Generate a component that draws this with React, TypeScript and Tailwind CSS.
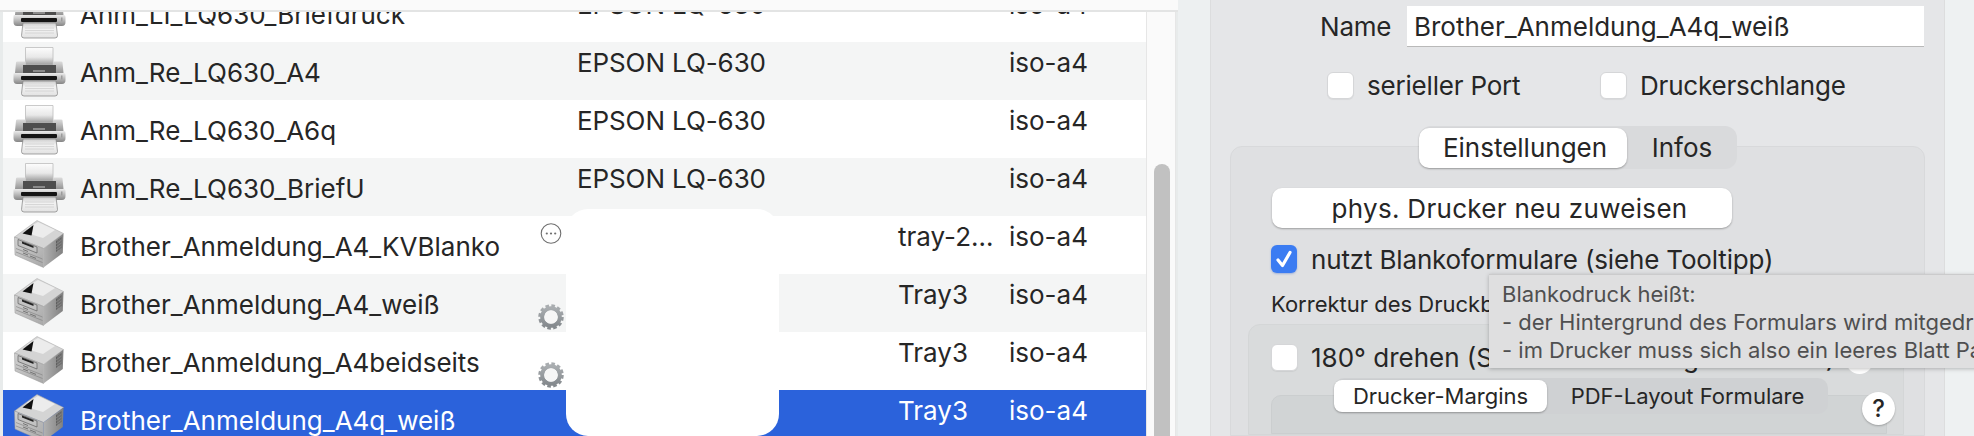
const font = "font-['Inter','Liberation_Sans',sans-serif]"

interface Row {
  name: string
  model: string
  tray: string
  kind: "dot" | "laser"
  badge?: "more" | "gear"
  selected?: boolean
}

const rows: Row[] = [
  { name: "Anm_LI_LQ630_Briefdruck", model: "EPSON LQ-630", tray: "", kind: "dot" },
  { name: "Anm_Re_LQ630_A4", model: "EPSON LQ-630", tray: "", kind: "dot" },
  { name: "Anm_Re_LQ630_A6q", model: "EPSON LQ-630", tray: "", kind: "dot" },
  { name: "Anm_Re_LQ630_BriefU", model: "EPSON LQ-630", tray: "", kind: "dot" },
  { name: "Brother_Anmeldung_A4_KVBlanko", model: "", tray: "tray-2…", kind: "laser", badge: "more" },
  { name: "Brother_Anmeldung_A4_weiß", model: "", tray: "Tray3", kind: "laser", badge: "gear" },
  { name: "Brother_Anmeldung_A4beidseits", model: "", tray: "Tray3", kind: "laser", badge: "gear" },
  { name: "Brother_Anmeldung_A4q_weiß", model: "", tray: "Tray3", kind: "laser", selected: true },
]

function DotPrinter() {
  return (
    <svg width="53" height="50" viewBox="0 0 53 50" className="mt-[5px] shrink-0">
      <defs>
        <linearGradient id="dp-paper" x1="0" y1="0" x2="0" y2="1">
          <stop offset="0" stopColor="#fdfdfd" />
          <stop offset="0.55" stopColor="#e8e8e8" />
          <stop offset="1" stopColor="#9c9c9c" />
        </linearGradient>
        <linearGradient id="dp-body" x1="0" y1="0" x2="0" y2="1">
          <stop offset="0" stopColor="#dcdcdc" />
          <stop offset="1" stopColor="#959595" />
        </linearGradient>
        <linearGradient id="dp-front" x1="0" y1="0" x2="0" y2="1">
          <stop offset="0" stopColor="#ececec" />
          <stop offset="1" stopColor="#858585" />
        </linearGradient>
        <linearGradient id="dp-out" x1="0" y1="0" x2="0" y2="1">
          <stop offset="0" stopColor="#cfcfcf" />
          <stop offset="0.4" stopColor="#f2f2f2" />
          <stop offset="1" stopColor="#e2e2e2" />
        </linearGradient>
      </defs>
      <path d="M12.5 0.5 H40 V18 H12.5 Z" fill="url(#dp-paper)" stroke="#bdbdbd" strokeWidth="0.8" />
      <path d="M3 15.5 Q3 14.5 4.5 14.5 H12.5 V18 H40 V14.5 H48 Q49.5 14.5 49.5 15.5 L50.5 26 H2 Z" fill="url(#dp-body)" />
      <rect x="10" y="18" width="33" height="8" fill="#4e4e4e" />
      <rect x="20" y="23" width="12" height="2" fill="#8b8b8b" />
      <path d="M1 26 H51 Q52.5 26 52.5 28 V33 Q52.5 37 49 37 H4 Q0.5 37 0.5 33 V28 Q0.5 26 1 26 Z" fill="url(#dp-front)" />
      <rect x="8" y="29" width="36" height="4" rx="1" fill="#141414" />
      <rect x="48" y="28.5" width="1.5" height="4" fill="#9b9b9b" />
      <path d="M10 34 H43 L44.5 46.5 Q44.5 49 42 49 H11 Q8.5 49 8.5 46.5 Z" fill="url(#dp-out)" stroke="#808080" strokeWidth="0.7" />
      <path d="M12 39 H41 M12 41.5 H41 M12 44 H41" stroke="#d0d0d0" strokeWidth="0.8" />
    </svg>
  )
}

function LaserPrinter() {
  return (
    <svg width="50" height="48" viewBox="0 0 50 48" className="mt-[4px] ml-[1px] shrink-0">
      <defs>
        <linearGradient id="lp-left" x1="0" y1="0" x2="1" y2="1">
          <stop offset="0" stopColor="#d2d2d2" />
          <stop offset="1" stopColor="#a8a8a8" />
        </linearGradient>
        <linearGradient id="lp-right" x1="0" y1="0" x2="1" y2="0">
          <stop offset="0" stopColor="#b2b2b2" />
          <stop offset="1" stopColor="#7f7f7f" />
        </linearGradient>
      </defs>
      <path d="M0.5 17 L23 0.5 L49.5 13.5 L29.5 28.5 Z" fill="#d4d4d4" stroke="#a6a6a6" strokeWidth="0.5" />
      <path d="M0.5 17 L29.5 28.5 V47.5 L1 35 Z" fill="url(#lp-left)" stroke="#969696" strokeWidth="0.5" />
      <path d="M29.5 28.5 L49.5 13.5 L48.8 33 L29.5 47.5 Z" fill="url(#lp-right)" />
      <path d="M13 8.5 L24 2 L41 10 L29 18 L19 15 Z" fill="#ececec" />
      <path d="M8.5 13.5 L19.5 5 L17.5 15.5 Z" fill="#111" />
      <path d="M4 19.5 L23 27 V33 L4 25.5 Z" fill="#c2c2c2" stroke="#5f5f5f" strokeWidth="0.7" />
      <path d="M8 21.5 L19.5 26 V28 L8 23.5 Z" fill="#222" />
      <path d="M2 28.5 L28.5 39 M2 32 L28.5 42.5" stroke="#7d7d7d" strokeWidth="0.6" />
      <path d="M9 29.5 L14 31.5 M16 36 L22 38.4 M9 33 L14 35" stroke="#5f5f5f" strokeWidth="0.8" />
      <path d="M42 21 L47.5 17 V28 L42 32 Z" fill="#5f5f5f" />
      <path d="M42 24 L47.5 20 M42 27 L47.5 23 M42 30 L47.5 26 M44 20 V31 M46 18.5 V29.5" stroke="#9c9c9c" strokeWidth="0.5" />
    </svg>
  )
}

function Gear() {
  return (
    <svg width="26" height="26" viewBox="0 0 26 26">
      <defs>
        <linearGradient id="gear-g" x1="0" y1="0" x2="0" y2="1">
          <stop offset="0" stopColor="#a9adb0" />
          <stop offset="1" stopColor="#858a8e" />
        </linearGradient>
      </defs>
      <circle cx="13" cy="13" r="10.5" fill="none" stroke="url(#gear-g)" strokeWidth="4.5" strokeDasharray="3.3 2.2" />
      <circle cx="13" cy="13" r="8.8" fill="none" stroke="url(#gear-g)" strokeWidth="4" />
      <circle cx="13" cy="13" r="6.6" fill="#f6f6f6" />
    </svg>
  )
}

function MoreIcon() {
  return (
    <svg width="22" height="21" viewBox="0 0 22 21">
      <circle cx="11" cy="10.5" r="9.8" fill="#fff" stroke="#6f6f6f" strokeWidth="1.1" />
      <circle cx="6.8" cy="10.5" r="1.1" fill="#6f6f6f" />
      <circle cx="11" cy="10.5" r="1.1" fill="#6f6f6f" />
      <circle cx="15.2" cy="10.5" r="1.1" fill="#6f6f6f" />
    </svg>
  )
}

function PrinterRow({ row, index }: { row: Row; index: number }) {
  const bg = row.selected ? "bg-[#2b62db] text-white" : index % 2 === 0 ? "bg-white" : "bg-[#f4f5f5]"
  return (
    <div className={`relative grid h-[58px] shrink-0 grid-cols-[574px_321px_111px_137px] text-[26px] leading-[30px] ${bg}`}>
      <div className="flex items-start pl-[10px]">
        <div className="w-[67px]">{row.kind === "dot" ? <DotPrinter /> : <LaserPrinter />}</div>
        <span className="pt-[16px] whitespace-nowrap">{row.name}</span>
      </div>
      <span className="pt-[6px] tracking-[-0.1px] whitespace-nowrap">{row.model}</span>
      <span className="pt-[6px] whitespace-nowrap">{row.tray}</span>
      <span className="pt-[6px] whitespace-nowrap">iso-a4</span>
      {row.badge === "more" && (
        <div className="absolute left-[537px] top-[7px]">
          <MoreIcon />
        </div>
      )}
      {row.badge === "gear" && (
        <div className="absolute left-[535px] top-[30px]">
          <Gear />
        </div>
      )}
    </div>
  )
}

function CheckBox({ checked }: { checked?: boolean }) {
  if (checked) {
    return (
      <span className="flex h-[28px] w-[26px] shrink-0 items-center justify-center rounded-[6px] bg-[#3b7cf2] shadow-[0_1px_2px_rgba(40,90,200,0.35)]">
        <svg width="18" height="20" viewBox="0 0 18 20">
          <path d="M3 11 L7.5 16.5 L15 3.5" fill="none" stroke="#fff" strokeWidth="3.2" strokeLinecap="round" strokeLinejoin="round" />
        </svg>
      </span>
    )
  }
  return <span className="block h-[27px] w-[27px] shrink-0 rounded-[6px] border border-[#d5d6d8] bg-white shadow-[0_1px_1px_rgba(0,0,0,0.06)]" />
}

function Tooltip() {
  return (
    <div className="absolute left-[1489px] top-[274px] h-[94px] w-[520px] border-t border-[#cbcbcc] bg-[#dfdfe0] pl-[13px] pt-[5px] text-[22px] leading-[28px] text-[#4f4f50] shadow-[0_1px_4px_rgba(0,0,0,0.25)] whitespace-nowrap">
      <div>Blankodruck heißt:</div>
      <div>- der Hintergrund des Formulars wird mitgedruckt</div>
      <div>- im Drucker muss sich also ein leeres Blatt Papier befinden</div>
    </div>
  )
}

export default function App() {
  return (
    <div className={`relative flex h-[436px] w-[1974px] overflow-hidden bg-[#eef1f2] text-[#262626] ${font}`}>
      {/* printer list */}
      <div className="flex h-full w-[1178px] shrink-0 flex-col">
        <div className="h-[12px] shrink-0 border-b-2 border-[#e3e4e4] bg-[#fafafa]" />
        <div className="flex min-h-0 flex-1 pl-[3px] bg-[#e8ebeb]">
          <div className="flex h-full w-[1143px] shrink-0 flex-col overflow-hidden">
            <div className="-mt-[28px] flex flex-col">
              {rows.map((row, i) => (
                <PrinterRow key={row.name} row={row} index={i} />
              ))}
            </div>
          </div>
          {/* scrollbar */}
          <div className="h-full w-[30px] shrink-0 border-x border-[#e6e6e6] bg-[#fafafa] pl-[7px] pt-[152px]">
            <div className="h-[400px] w-[16px] rounded-full bg-[#c1c1c1]" />
          </div>
        </div>
      </div>

      <div className="w-[32px] shrink-0 bg-[#edf0f1]" />

      {/* detail panel */}
      <div className="flex h-full w-[735px] shrink-0 flex-col border-x border-[#dcddde] bg-[#e5e6e8]">
        <div className="mt-[6px] flex h-[41px] items-center pl-[109px]">
          <span className="w-[87px] text-[26px] tracking-[-0.2px]">Name</span>
          <div className="flex h-[41px] w-[517px] items-center border-b border-[#b9b9b9] bg-white pl-[7px] text-[26px]">
            Brother_Anmeldung_A4q_weiß
          </div>
        </div>
        <div className="mt-[25px] flex h-[27px] items-center pl-[116px] text-[26px] tracking-[-0.2px]">
          <CheckBox />
          <span className="ml-[13px] w-[233px]">serieller Port</span>
          <CheckBox />
          <span className="ml-[13px]">Druckerschlange</span>
        </div>

        <div className="ml-[19px] mt-[47px] flex min-h-0 w-[695px] flex-1 flex-col rounded-t-[12px] border border-[#d8d9db] bg-[#dfe0e2]">
          <div className="relative z-10 ml-[188px] -mt-[21px] flex h-[43px] w-[318px] shrink-0 items-center rounded-[12px] bg-[#d9dadc] text-[26px]">
            <span className="flex h-[40px] w-[208px] items-center justify-center rounded-[10px] bg-white pl-[4px] shadow-[0_1px_2px_rgba(0,0,0,0.3)]">Einstellungen</span>
            <span className="flex-1 text-center">Infos</span>
          </div>
          <div className="ml-[41px] mt-[19px] flex h-[40px] w-[460px] shrink-0 items-center justify-center rounded-[10px] bg-white pl-[15px] text-[26px] tracking-[0.3px] shadow-[0_1px_2px_rgba(0,0,0,0.3)]">
            phys. Drucker neu zuweisen
          </div>
          <div className="ml-[40px] mt-[17px] flex h-[28px] shrink-0 items-center text-[26px] tracking-[-0.16px]">
            <CheckBox checked />
            <span className="ml-[14px]">nutzt Blankoformulare (siehe Tooltipp)</span>
          </div>
          <div className="ml-[40px] mt-[17px] h-[28px] shrink-0 text-[22px] leading-[28px]">Korrektur des Druckbereichs</div>
          <div className="ml-[17px] mt-[6px] flex min-h-0 w-[656px] flex-1 flex-col rounded-t-[12px] border border-[#d4d6d7] bg-[#d9dbdc]">
            <div className="ml-[22px] mt-[19px] flex h-[27px] shrink-0 items-center text-[26px]">
              <CheckBox />
              <span className="ml-[13px] whitespace-nowrap">180° drehen (Seitenausrichtung aktivieren)</span>
            </div>
            <div className="relative z-10 ml-[85px] mt-[7px] flex h-[36px] w-[494px] shrink-0 items-center rounded-[10px] bg-[#cfd1d3] text-[22px]">
              <span className="flex h-[32px] w-[213px] items-center justify-center rounded-[8px] bg-white shadow-[0_1px_2px_rgba(0,0,0,0.3)]">Drucker-Margins</span>
              <span className="flex-1 text-center">PDF-Layout Formulare</span>
            </div>
            <div className="ml-[22px] -mt-[19px] w-[616px] flex-1 rounded-t-[10px] border border-[#cbcecf] bg-[#d1d4d5]" />
          </div>
        </div>
      </div>

      {/* help buttons */}
      <span className="absolute left-[1846px] top-[347px] h-[27px] w-[27px] rounded-full bg-white" />
      <span className="absolute left-[1862px] top-[392px] flex h-[33px] w-[33px] items-center justify-center rounded-full bg-white text-[24px] font-medium shadow-[0_1px_2px_rgba(0,0,0,0.25)]">?</span>

      {/* redacted cell */}
      <div className="absolute left-[566px] top-[209px] h-[227px] w-[213px] rounded-[22px] bg-white" />

      <Tooltip />
    </div>
  )
}
